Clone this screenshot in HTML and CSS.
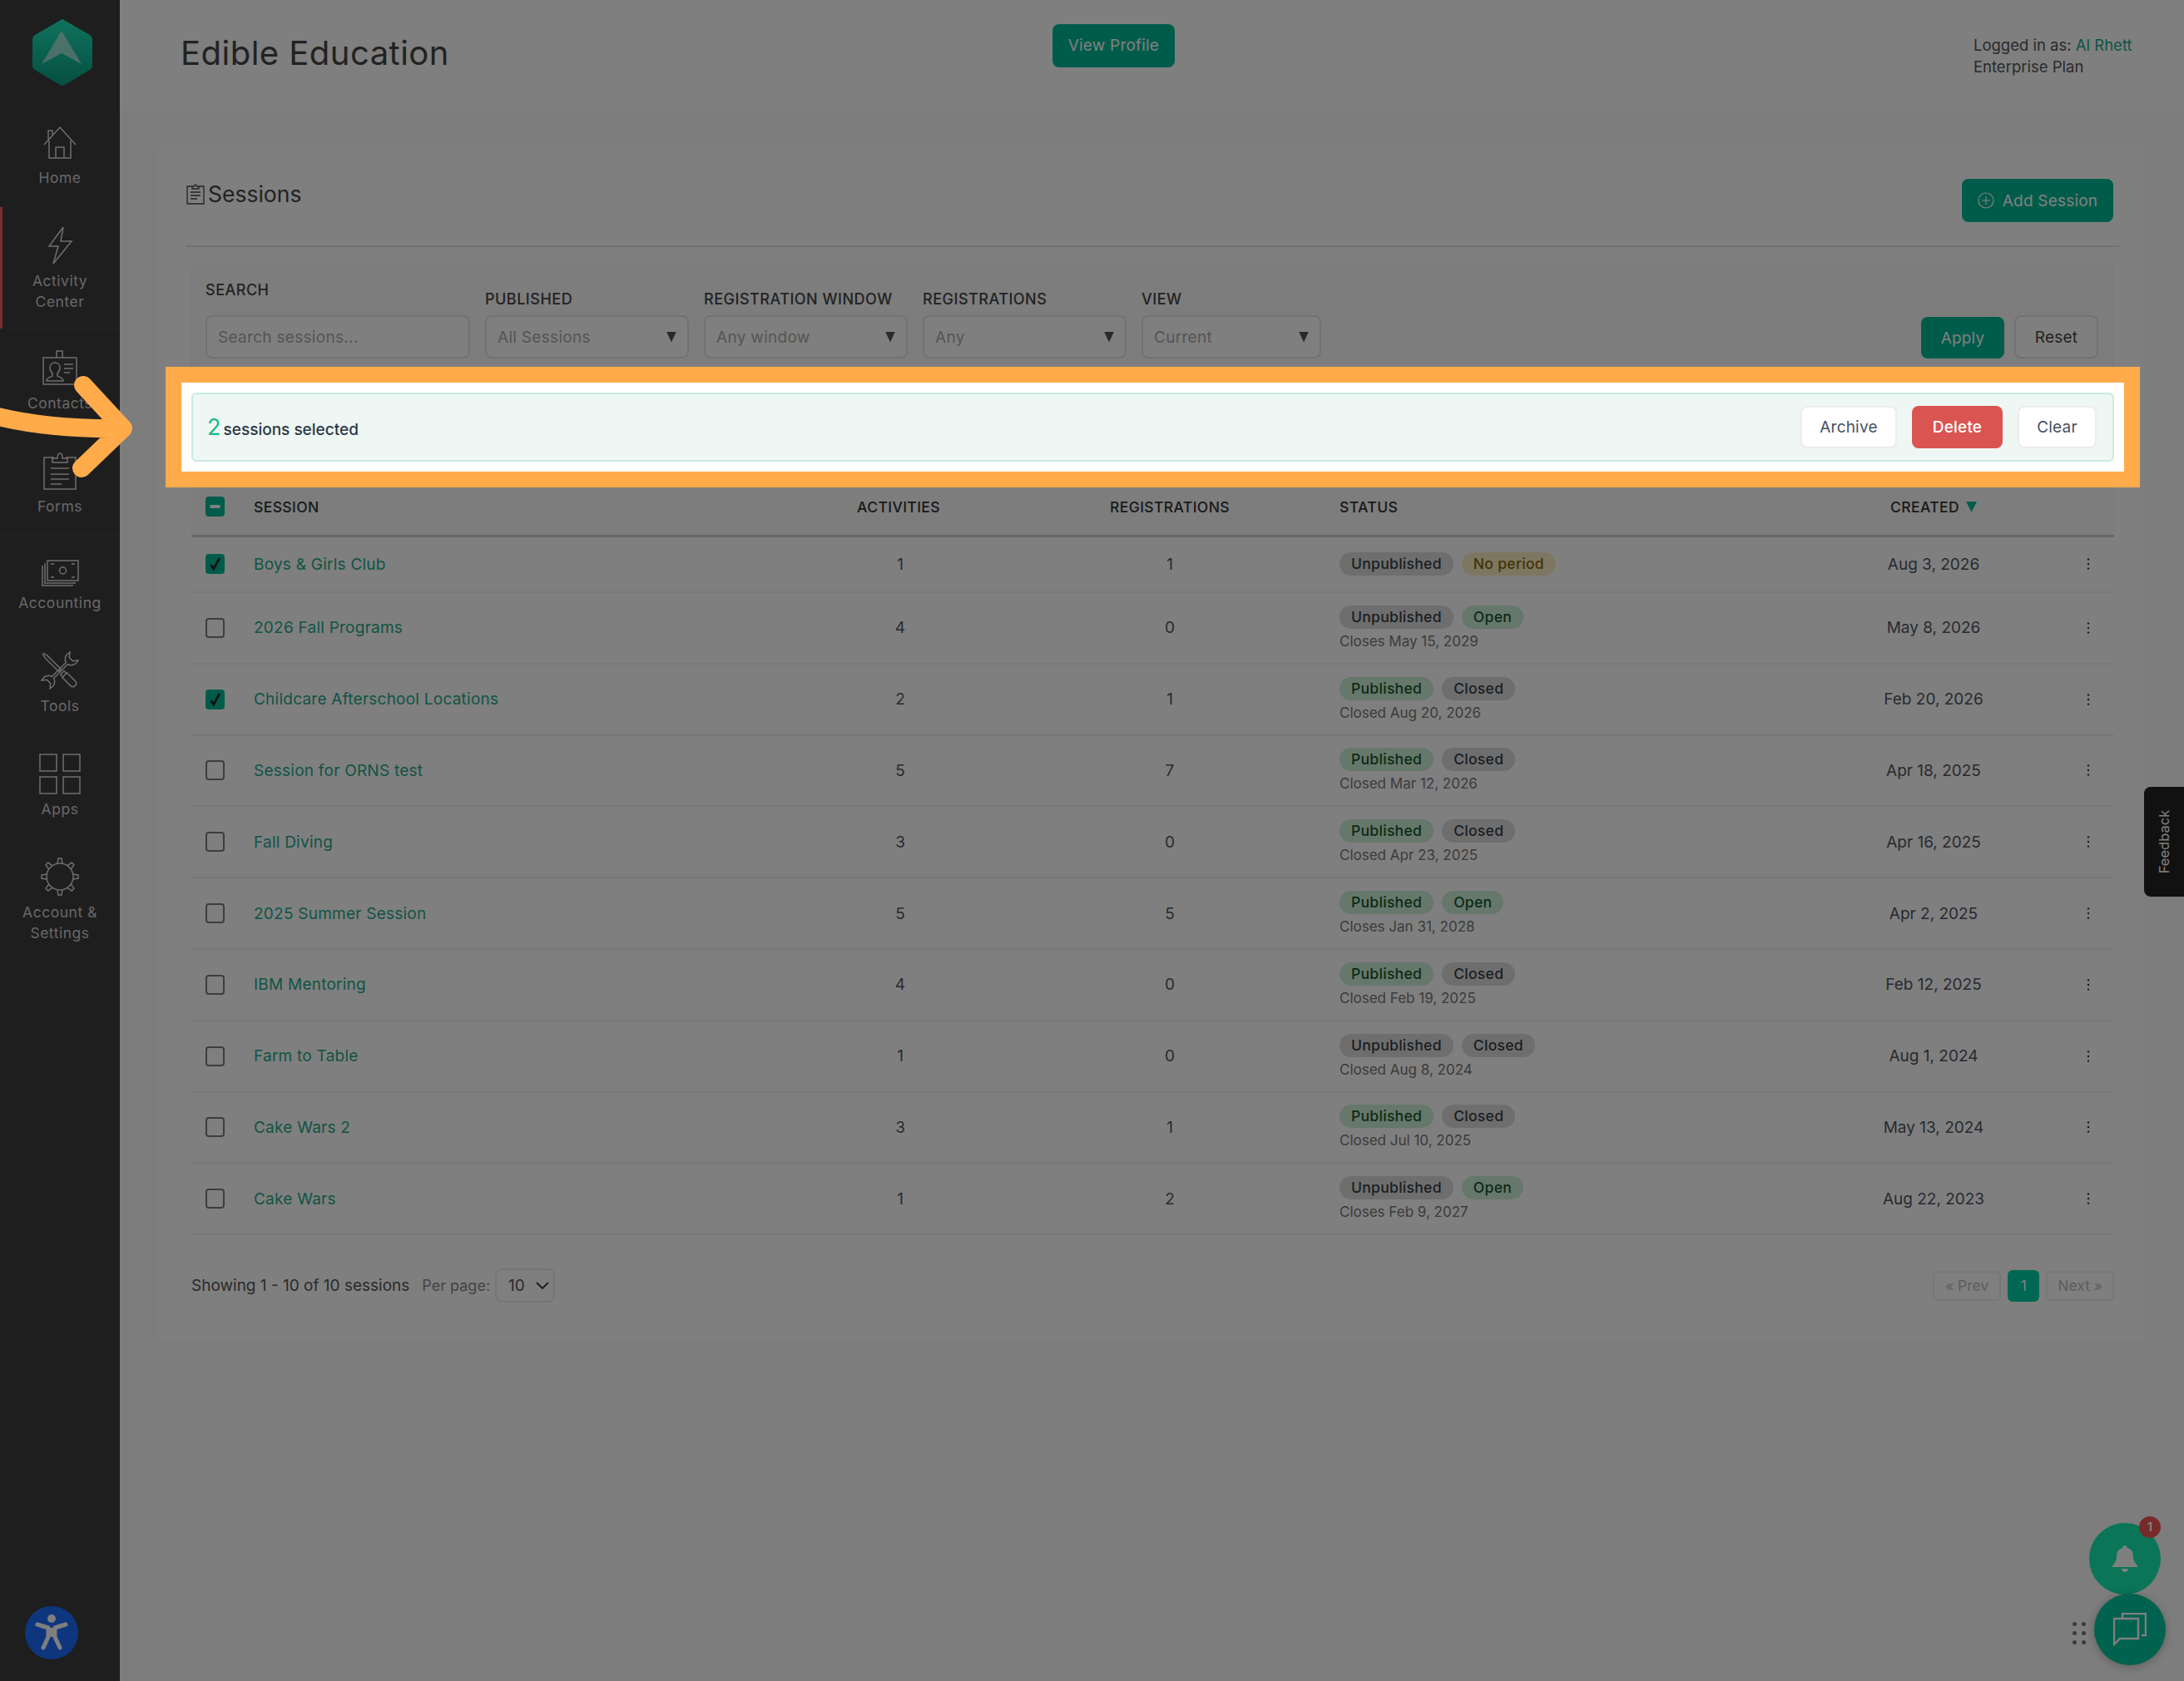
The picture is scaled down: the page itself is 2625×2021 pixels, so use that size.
FILE: index.html
```html
<!DOCTYPE html>
<html>
  <head>
    <title>Sessions - Edible Education</title>
    <link rel="stylesheet" href="styles.css">
  </head>
  <body>
    <svg class="defs" width="0" height="0">
      <symbol id="check" viewBox="0 0 24 24"><path d="M6 13l4 6 8-15" fill="none" stroke="#222" stroke-width="3.2"/></symbol>
      <symbol id="dots" viewBox="0 0 8 20"><circle cx="4" cy="3" r="1.5"/><circle cx="4" cy="10" r="1.5"/><circle cx="4" cy="17" r="1.5"/></symbol>
    </svg>

    <div class="app">
      <aside class="sidebar">
        <div class="logo">
          <svg width="74" height="82" viewBox="0 0 74 82">
            <defs>
              <linearGradient id="hex" x1="0" y1="0" x2="0" y2="1">
                <stop offset="0" stop-color="#1ee6bd"/>
                <stop offset="1" stop-color="#0a9e80"/>
              </linearGradient>
            </defs>
            <path d="M37 1l33 19q3 2 3 5v32q0 3-3 5L40 80q-3 2-6 0L4 62q-3-2-3-5V25q0-3 3-5z" fill="url(#hex)"/>
            <path d="M36 15L60 55 36 42 12 55z" fill="#e8f3ef" opacity=".62"/>
          </svg>
        </div>
        <a class="nav-item">
          <span class="nav-icon">
            <svg width="40" height="40" viewBox="0 0 40 40"><path d="M1 23L20 2l19 21M7 18v21h26V18M15 39V26h10v13M6 17V6h5v5" /></svg>
          </span>
          Home
        </a>
        <a class="nav-item active">
          <span class="nav-icon">
            <svg width="30" height="46" viewBox="0 0 30 46"><path d="M19 1L2 24h11L7 45l22-27H16z"/></svg>
          </span>
          Activity<br>Center
        </a>
        <a class="nav-item">
          <span class="nav-icon">
            <svg width="42" height="42" viewBox="0 0 42 42"><path d="M1 9h40v32H1zM17 9V1h7v8M5 37c0-4 5-5 7-6v-3c-2-2-3-4-3-7 0-4 3-6 6-6s6 2 6 6c0 3-1 5-3 7v3c2 1 7 2 7 6zM26 17h11M26 22h11M26 27h7"/></svg>
          </span>
          Contacts
        </a>
        <a class="nav-item">
          <span class="nav-icon">
            <svg width="40" height="46" viewBox="0 0 40 46"><path d="M13 7H1v38h38V7H27M11 13h18V8h-6c0-3-1-6-3-6s-3 3-3 6h-6zM9 20h22M9 27h22M9 33h22M9 39h13"/></svg>
          </span>
          Forms
        </a>
        <a class="nav-item nav-item-short">
          <span class="nav-icon">
            <svg width="46" height="32" viewBox="0 0 46 32"><path d="M8 1h37v24H8zM5 4v24h37M2 7v24h37"/><circle cx="26.500" cy="13" r="4"/><path d="M12 5h4M37 5h4M12 21h4M37 21h4"/></svg>
          </span>
          Accounting
        </a>
        <a class="nav-item">
          <span class="nav-icon">
            <svg width="44" height="44" viewBox="0 0 44 44">
              <g transform="rotate(45 22 22)">
                <path d="M-7 21h3l2-1h24M-7 23h3l2 1h24M30 18h14q4 0 4 4t-4 4H30zM22 20v4M26 19v6h4v-6z"/>
              </g>
              <g transform="rotate(-45 22 22)">
                <path d="M34 20.500C35 16 40 13 46 15l-5 4v6l5 4c-6 2-11-1-12-5.500H10C9 28 4 31-2 29l5-4v-6l-5-4C4 13 9 16 10 20.500z"/>
              </g>
            </svg>
          </span>
          Tools
        </a>
        <a class="nav-item">
          <span class="nav-icon">
            <svg width="48" height="48" viewBox="0 0 48 48"><path d="M1 1h20v20H1zM29 1h20v20H29zM1 28h20v20H1zM29 28h20v20H29z" transform="translate(-1)"/></svg>
          </span>
          Apps
        </a>
        <a class="nav-item">
          <span class="nav-icon">
            <svg width="46" height="46" viewBox="0 0 46 46">
              <circle cx="23" cy="23" r="16"/>
              <path d="M20 7l1-6h4l1 6" />
              <path d="M20 7l1-6h4l1 6" transform="rotate(45 23 23)"/>
              <path d="M20 7l1-6h4l1 6" transform="rotate(90 23 23)"/>
              <path d="M20 7l1-6h4l1 6" transform="rotate(135 23 23)"/>
              <path d="M20 7l1-6h4l1 6" transform="rotate(180 23 23)"/>
              <path d="M20 7l1-6h4l1 6" transform="rotate(225 23 23)"/>
              <path d="M20 7l1-6h4l1 6" transform="rotate(270 23 23)"/>
              <path d="M20 7l1-6h4l1 6" transform="rotate(315 23 23)"/>
            </svg>
          </span>
          Account &amp;<br>Settings
        </a>
        <div class="a11y">
          <svg width="64" height="64" viewBox="0 0 64 64">
            <circle cx="32" cy="32" r="32" fill="#1a6cff"/>
            <circle cx="32" cy="15" r="5" fill="#fff"/>
            <path d="M15 22l13 4v11l-6 13M49 22l-13 4v11l6 13M28 34h8" fill="none" stroke="#fff" stroke-width="5" stroke-linecap="round" stroke-linejoin="round"/>
            <path d="M28 26h8v11h-8z" fill="#fff"/>
          </svg>
        </div>
      </aside>

      <div class="main">
        <header class="topbar">
          <h1>Edible Education</h1>
          <a class="btn btn-green btn-profile">View Profile</a>
          <div class="user-info">
            Logged in as: <a class="link">Al Rhett</a><br>
            Enterprise Plan
          </div>
        </header>

        <section class="content">
          <div class="card">
            <div class="card-head">
              <h2>
                <svg width="22" height="25" viewBox="0 0 22 25"><path d="M7 3H1v21h20V3h-6M7 6h8V3h-2.500c0-1-.5-2-1.500-2s-1.500 1-1.500 2H7zM5 10h12M5 14h12M5 18h8" fill="none" stroke="#444" stroke-width="1.300"/></svg>
                Sessions
              </h2>
              <a class="btn btn-green btn-add">
                <svg width="20" height="20" viewBox="0 0 20 20"><circle cx="10" cy="10" r="9"/><path d="M10 5v10M5 10h10"/></svg>
                Add Session
              </a>
            </div>

            <div class="filters">
              <label class="field field-search">
                <span class="field-label">SEARCH</span>
                <input type="text" placeholder="Search sessions...">
              </label>
              <div class="field field-published">
                <span class="field-label">PUBLISHED</span>
                <div class="select">All Sessions<i class="caret"></i></div>
              </div>
              <div class="field field-window">
                <span class="field-label">REGISTRATION WINDOW</span>
                <div class="select">Any window<i class="caret"></i></div>
              </div>
              <div class="field field-regs">
                <span class="field-label">REGISTRATIONS</span>
                <div class="select">Any<i class="caret"></i></div>
              </div>
              <div class="field field-view">
                <span class="field-label">VIEW</span>
                <div class="select">Current<i class="caret"></i></div>
              </div>
              <div class="filter-actions">
                <a class="btn btn-green btn-apply">Apply</a>
                <a class="btn btn-reset">Reset</a>
              </div>
            </div>

            <div class="spot">
              <div class="bulk-bar">
                <div class="bulk-count"><b>2</b> sessions selected</div>
                <div class="bulk-actions">
                  <a class="btn btn-white btn-archive">Archive</a>
                  <a class="btn btn-red">Delete</a>
                  <a class="btn btn-white btn-clear">Clear</a>
                </div>
              </div>
            </div>

            <table class="sessions">
              <colgroup>
                <col class="col-check"><col class="col-session"><col class="col-activities"><col class="col-regs"><col class="col-status"><col class="col-created"><col class="col-menu">
              </colgroup>
              <thead>
                <tr>
                  <th><span class="cb cb-on cb-minus"></span></th>
                  <th class="left">SESSION</th>
                  <th class="th-activities">ACTIVITIES</th>
                  <th>REGISTRATIONS</th>
                  <th class="left status">STATUS</th>
                  <th>CREATED <i class="sort-arrow"></i></th>
                  <th></th>
                </tr>
              </thead>
              <tbody>
                <tr class="row-first">
                  <td><span class="cb cb-on"><svg><use href="#check"/></svg></span></td>
                  <td><a class="link">Boys &amp; Girls Club</a></td>
                  <td>1</td><td>1</td>
                  <td class="status"><span class="pill pill-grey">Unpublished</span><span class="pill pill-yellow">No period</span></td>
                  <td>Aug 3, 2026</td>
                  <td><svg class="menu-dots"><use href="#dots"/></svg></td>
                </tr>
                <tr>
                  <td><span class="cb"></span></td>
                  <td><a class="link">2026 Fall Programs</a></td>
                  <td>4</td><td>0</td>
                  <td class="status"><span class="pill pill-grey">Unpublished</span><span class="pill pill-green">Open</span><div class="sub">Closes May 15, 2029</div></td>
                  <td>May 8, 2026</td>
                  <td><svg class="menu-dots"><use href="#dots"/></svg></td>
                </tr>
                <tr>
                  <td><span class="cb cb-on"><svg><use href="#check"/></svg></span></td>
                  <td><a class="link">Childcare Afterschool Locations</a></td>
                  <td>2</td><td>1</td>
                  <td class="status"><span class="pill pill-green">Published</span><span class="pill pill-grey">Closed</span><div class="sub">Closed Aug 20, 2026</div></td>
                  <td>Feb 20, 2026</td>
                  <td><svg class="menu-dots"><use href="#dots"/></svg></td>
                </tr>
                <tr>
                  <td><span class="cb"></span></td>
                  <td><a class="link">Session for ORNS test</a></td>
                  <td>5</td><td>7</td>
                  <td class="status"><span class="pill pill-green">Published</span><span class="pill pill-grey">Closed</span><div class="sub">Closed Mar 12, 2026</div></td>
                  <td>Apr 18, 2025</td>
                  <td><svg class="menu-dots"><use href="#dots"/></svg></td>
                </tr>
                <tr>
                  <td><span class="cb"></span></td>
                  <td><a class="link">Fall Diving</a></td>
                  <td>3</td><td>0</td>
                  <td class="status"><span class="pill pill-green">Published</span><span class="pill pill-grey">Closed</span><div class="sub">Closed Apr 23, 2025</div></td>
                  <td>Apr 16, 2025</td>
                  <td><svg class="menu-dots"><use href="#dots"/></svg></td>
                </tr>
                <tr>
                  <td><span class="cb"></span></td>
                  <td><a class="link">2025 Summer Session</a></td>
                  <td>5</td><td>5</td>
                  <td class="status"><span class="pill pill-green">Published</span><span class="pill pill-green">Open</span><div class="sub">Closes Jan 31, 2028</div></td>
                  <td>Apr 2, 2025</td>
                  <td><svg class="menu-dots"><use href="#dots"/></svg></td>
                </tr>
                <tr>
                  <td><span class="cb"></span></td>
                  <td><a class="link">IBM Mentoring</a></td>
                  <td>4</td><td>0</td>
                  <td class="status"><span class="pill pill-green">Published</span><span class="pill pill-grey">Closed</span><div class="sub">Closed Feb 19, 2025</div></td>
                  <td>Feb 12, 2025</td>
                  <td><svg class="menu-dots"><use href="#dots"/></svg></td>
                </tr>
                <tr>
                  <td><span class="cb"></span></td>
                  <td><a class="link">Farm to Table</a></td>
                  <td>1</td><td>0</td>
                  <td class="status"><span class="pill pill-grey">Unpublished</span><span class="pill pill-grey">Closed</span><div class="sub">Closed Aug 8, 2024</div></td>
                  <td>Aug 1, 2024</td>
                  <td><svg class="menu-dots"><use href="#dots"/></svg></td>
                </tr>
                <tr>
                  <td><span class="cb"></span></td>
                  <td><a class="link">Cake Wars 2</a></td>
                  <td>3</td><td>1</td>
                  <td class="status"><span class="pill pill-green">Published</span><span class="pill pill-grey">Closed</span><div class="sub">Closed Jul 10, 2025</div></td>
                  <td>May 13, 2024</td>
                  <td><svg class="menu-dots"><use href="#dots"/></svg></td>
                </tr>
                <tr>
                  <td><span class="cb"></span></td>
                  <td><a class="link">Cake Wars</a></td>
                  <td>1</td><td>2</td>
                  <td class="status"><span class="pill pill-grey">Unpublished</span><span class="pill pill-green">Open</span><div class="sub">Closes Feb 9, 2027</div></td>
                  <td>Aug 22, 2023</td>
                  <td><svg class="menu-dots"><use href="#dots"/></svg></td>
                </tr>
              </tbody>
            </table>

            <div class="table-footer">
              <div class="showing">
                Showing 1 - 10 of 10 sessions
                <span class="per-page">Per page:</span>
                <div class="per-select">10
                  <svg width="16" height="10" viewBox="0 0 16 10"><path d="M1 1l7 7 7-7" fill="none" stroke="#333" stroke-width="1.800"/></svg>
                </div>
              </div>
              <div class="pager">
                <a class="page-btn page-prev">« Prev</a>
                <a class="page-btn page-current">1</a>
                <a class="page-btn page-next">Next »</a>
              </div>
            </div>
          </div>
        </section>
      </div>
    </div>

    <div class="feedback"><span>Feedback</span></div>

    <div class="fab fab-bell">
      <svg width="30" height="32" viewBox="0 0 30 32"><path d="M15 0c1.500 0 2.500 1 2.500 3 5 1 7.500 5 7.500 10 0 6 2 8 5 11v2H0v-2c3-3 5-5 5-11 0-5 2.500-9 7.500-10 0-2 1-3 2.500-3zM11 28h8c0 2.500-2 4-4 4s-4-1.500-4-4z" fill="#fff"/></svg>
      <span class="fab-badge">1</span>
    </div>
    <div class="fab fab-chat">
      <svg width="40" height="40" viewBox="0 0 40 40"><path d="M11 6V1h28v26h-5M1 7h29v24H8l-7 7z" fill="none" stroke="#fff" stroke-width="2.400"/></svg>
    </div>
    <div class="drag-dots">
      <i></i><i></i><i></i><i></i><i></i><i></i>
    </div>

    <div class="dim"></div>

    <svg class="arrow" width="170" height="130" viewBox="0 0 170 130">
      <path d="M-10 49C40 62 90 66 148 65M100 13l48 52-50 48" fill="none" stroke="#ffab4a" stroke-width="22" stroke-linecap="round" stroke-linejoin="round"/>
    </svg>
  </body>
</html>
```

FILE: styles.css
```css
:root {
  --green: #00b894;
  --green-text: #24a988;
  --text: #2d3748;
  --muted: #4f5560;
  --line: #ececec;
}

* {
  box-sizing: border-box;
}

html,
body {
  height: 100%;
}

body {
  margin: 0;
  overflow: hidden;
  font-family: Inter, "Noto Sans", sans-serif;
  font-size: 19px;
  color: var(--text);
  background: #fbfbfb;
}

.defs {
  position: absolute;
}

a {
  text-decoration: none;
}

.app {
  display: flex;
  height: 2021px;
}

/* sidebar */
.sidebar {
  position: relative;
  width: 144px;
  flex: none;
  background: #3d3d3d;
  color: #cfcfcf;
}

.logo {
  height: 125px;
  padding: 22px 0 0 38px;
  border-bottom: 1px solid #444;
}

.nav-item {
  display: block;
  padding: 21px 0 22px;
  text-align: center;
  font-size: 17.500px;
  line-height: 25px;
  letter-spacing: 0.03em;
  border-bottom: 1px solid #444;
}

.nav-item.active {
  padding-bottom: 20px;
  box-shadow: inset 3px 0 0 #f55c5c;
}

.nav-item-short {
  padding: 27px 0 22px;
}

.nav-icon {
  display: flex;
  align-items: center;
  justify-content: center;
  height: 50px;
  margin-bottom: 5px;
}

.nav-item-short .nav-icon {
  height: 36px;
}

.nav-icon svg {
  overflow: visible;
  fill: none;
  stroke: #dcdcdc;
  stroke-width: 1.500;
}

.a11y {
  position: absolute;
  left: 30px;
  top: 1931px;
  height: 64px;
}

/* top bar */
.main {
  flex: 1;
  min-width: 0;
}

.topbar {
  position: relative;
  display: flex;
  align-items: center;
  height: 133px;
  padding-left: 73px;
  background: #fff;
}

.topbar h1 {
  margin: 0 0 7px;
  font-size: 40px;
  font-weight: 400;
  letter-spacing: 0.012em;
  color: #444;
}

.btn {
  display: flex;
  align-items: center;
  justify-content: center;
  gap: 10px;
  border-radius: 8px;
  font-size: 19px;
  letter-spacing: 0.01em;
}

.btn-green {
  background: var(--green);
  color: #fff;
}

.btn-profile {
  width: 147px;
  height: 52px;
  margin: 0 0 24px 725px;
}

.user-info {
  margin: 0 0 0 960px;
  font-size: 18.500px;
  line-height: 26px;
  white-space: nowrap;
  color: #555;
}

.link {
  color: var(--green-text);
}

/* content card */
.content {
  height: 1888px;
  padding: 42px 49px 0 46px;
}

.card {
  height: 1437px;
  padding: 40px 29px 0 34px;
  background: #fff;
}

.card-head {
  display: flex;
  justify-content: space-between;
  height: 82px;
  padding-right: 7px;
  border-bottom: 2px solid #e2e2e2;
}

.card-head h2 {
  display: flex;
  align-items: center;
  gap: 4px;
  height: 36px;
  margin: 0;
  font-size: 26.500px;
  font-weight: 400;
  color: #444;
}

.btn-add {
  width: 182px;
  height: 52px;
}

.btn-add svg {
  fill: none;
  stroke: #fff;
  stroke-width: 1.200;
}

.filters {
  display: flex;
  align-items: flex-end;
  gap: 18px;
  height: 132px;
  margin: 20px 6px 0;
  padding: 0 18px 17px 16px;
  background: #fafafa;
  border: 1px solid #f0f0f0;
  border-radius: 8px;
}

.field {
  display: flex;
  flex-direction: column;
  flex: none;
}

.field-search {
  width: 318px;
}

.field-search input {
  padding-left: 14px;
}

.field-search .field-label {
  margin-bottom: 18px;
}

.field-published {
  width: 245px;
}

.field-window {
  width: 245px;
}

.field-regs {
  width: 245px;
}

.field-view {
  width: 216px;
}

.field-label {
  margin-bottom: 7px;
  font-size: 18px;
  line-height: 24px;
  font-weight: 500;
  letter-spacing: 0.5px;
  color: #444;
}

.field input,
.select {
  height: 52px;
  padding: 0 13px;
  border: 2px solid #e4e4e4;
  border-radius: 8px;
  font-family: inherit;
  font-size: 19px;
  letter-spacing: 0.3px;
  background: #fff;
  color: #aaa;
}

.field input::placeholder {
  color: #aaa;
}

.select {
  display: flex;
  align-items: center;
  justify-content: space-between;
}

.caret {
  width: 12px;
  height: 13px;
  background: #555;
  clip-path: polygon(0 0, 100% 0, 50% 100%);
}

.filter-actions {
  display: flex;
  align-items: flex-end;
  gap: 12px;
  margin-left: auto;
}

.btn-apply {
  width: 100px;
  height: 50px;
}

.btn-reset {
  width: 101px;
  height: 52px;
  border: 2px solid #e4e4e4;
  color: #444;
  background: #fff;
}

/* selection bar sits over the dim layer */
.spot {
  position: relative;
  z-index: 11;
  margin: -8px -25px 0;
  padding: 12px;
  background: #fff;
  border: 19px solid #ffab4a;
}

.bulk-bar {
  display: flex;
  align-items: center;
  justify-content: space-between;
  height: 83px;
  padding: 0 19px 0 17px;
  background: #eef7f3;
  border: 2px solid #c9ebdd;
  border-radius: 6px;
}

.bulk-count {
  font-size: 19px;
  font-weight: 500;
  color: var(--text);
}

.bulk-count b {
  margin-right: -2px;
  font-size: 27px;
  font-weight: 400;
  color: #19b98f;
}

.bulk-actions {
  display: flex;
  gap: 18px;
}

.btn-white {
  height: 51px;
  background: #fff;
  border: 2px solid #ececec;
  color: #4a5060;
}

.btn-archive {
  width: 116px;
}

.btn-clear {
  width: 95px;
}

.btn-red {
  width: 109px;
  height: 51px;
  font-weight: 500;
  background: #da5552;
  color: #fff;
}

/* sessions table */
.sessions {
  width: 2311px;
  margin: -14px 6px 0;
  border-collapse: collapse;
  table-layout: fixed;
}

.col-check {
  width: 58px;
}

.col-session {
  width: 634px;
}

.col-activities {
  width: 320px;
}

.col-regs {
  width: 328px;
}

.col-status {
  width: 601px;
}

.col-created {
  width: 306px;
}

.col-menu {
  width: 64px;
}

.sessions th {
  height: 72px;
  padding: 4px 0 0;
  font-size: 17.500px;
  font-weight: 500;
  letter-spacing: 0.4px;
  color: #333;
  background: #fafafa;
  border-bottom: 3px solid #cfcfcf;
}

.sessions th.left {
  text-align: left;
  padding-left: 17px;
}

.sessions th.th-activities {
  padding-right: 4px;
}

.sessions td {
  height: 85.800px;
  padding: 0;
  text-align: center;
  color: var(--muted);
  border-bottom: 2px solid #f0f0f0;
}

.sessions .row-first td {
  height: 68px;
}

.sessions td:nth-child(1),
.sessions td:nth-child(2) {
  text-align: left;
  padding-left: 17px;
  letter-spacing: 0.24px;
}

.sessions .status,
.sessions td.status,
.sessions th.status {
  padding-left: 40px;
  text-align: left;
}

.sort-arrow {
  display: inline-block;
  width: 13px;
  height: 13px;
  margin-left: 3px;
  background: var(--green);
  clip-path: polygon(0 0, 100% 0, 50% 100%);
}

.cb {
  display: block;
  width: 23px;
  height: 24px;
  border: 2px solid #7a7a7a;
  border-radius: 4px;
  margin-left: 17px;
}

.sessions td .cb {
  margin-left: 0;
}

.cb-on {
  position: relative;
  background: var(--green);
  border-color: var(--green);
}

.cb-on svg {
  position: absolute;
  left: -1px;
  top: -1px;
  width: 21px;
  height: 22px;
}

.cb-minus::after {
  content: "";
  position: absolute;
  left: 3px;
  top: 8px;
  width: 13px;
  height: 4px;
  border-radius: 2px;
  background: #fff;
}

.pill {
  display: inline-block;
  height: 28px;
  margin-right: 10px;
  padding: 0 14px;
  border-radius: 14px;
  font-size: 17.500px;
  line-height: 28px;
  font-weight: 500;
  letter-spacing: 0.3px;
}

.pill-grey {
  background: #dcdcde;
  color: #383d41;
}

.pill-green {
  background: #cdeed8;
  color: #155724;
}

.pill-yellow {
  background: #fbeec4;
  color: #856404;
}

.sub {
  margin-top: 4px;
  font-size: 17px;
  line-height: 22px;
  color: #777;
}

.menu-dots {
  display: block;
  width: 8px;
  height: 16px;
  margin-left: 29px;
  fill: #333;
}

/* footer */
.table-footer {
  display: flex;
  align-items: center;
  justify-content: space-between;
  margin: 40px 6px 0;
}

.showing {
  display: flex;
  align-items: center;
  font-size: 19px;
  color: #555;
}

.per-page {
  margin: 0 6px 0 15px;
  font-size: 18px;
  color: #888;
}

.per-select {
  display: flex;
  align-items: center;
  justify-content: space-between;
  width: 72px;
  height: 41px;
  padding: 0 5px 0 14px;
  border: 2px solid #ececec;
  border-radius: 8px;
  color: #555;
}

.pager {
  display: flex;
  align-items: center;
  gap: 8px;
}

.page-btn {
  display: flex;
  align-items: center;
  justify-content: center;
  height: 36px;
  padding: 0 14px;
  border: 2px solid #eee;
  border-radius: 6px;
  font-size: 17.500px;
  color: #bbb;
}

.page-prev {
  padding: 0 13px;
}

.page-next {
  padding: 0 12px;
}

.page-current {
  width: 38px;
  height: 38px;
  padding: 0;
  background: #00cea4;
  border-color: #00cea4;
  color: #fff;
}

/* floating bits */
.feedback {
  position: absolute;
  right: 0;
  top: 946px;
  display: flex;
  align-items: center;
  justify-content: center;
  width: 48px;
  height: 132px;
  background: #222;
  border-radius: 8px 0 0 8px;
  color: #fff;
  font-size: 16.500px;
}

.feedback span {
  transform: rotate(-90deg);
}

.fab {
  position: absolute;
  display: flex;
  align-items: center;
  justify-content: center;
  border-radius: 50%;
}

.fab-bell {
  left: 2511px;
  top: 1831px;
  width: 86px;
  height: 86px;
  background: #15eaae;
}

.fab-badge {
  position: absolute;
  left: 60px;
  top: -8px;
  width: 26px;
  height: 26px;
  border-radius: 50%;
  background: #e55;
  color: #fff;
  font-size: 14px;
  font-weight: 700;
  line-height: 26px;
  text-align: center;
}

.fab-chat {
  left: 2517px;
  top: 1916px;
  width: 86px;
  height: 86px;
  background: #03c69e;
  box-shadow: 0 2px 12px rgba(0, 0, 0, 0.25);
}

.drag-dots {
  position: absolute;
  left: 2491px;
  top: 1950px;
  display: grid;
  grid-template-columns: 5px 5px;
  gap: 6px;
}

.drag-dots i {
  width: 5px;
  height: 5px;
  border-radius: 50%;
  background: #777;
}

/* page wide dim layer and callout arrow */
.dim {
  position: fixed;
  inset: 0;
  z-index: 10;
  background: rgba(0, 0, 0, 0.5);
}

.arrow {
  position: absolute;
  left: 0;
  top: 450px;
  z-index: 12;
}
```
